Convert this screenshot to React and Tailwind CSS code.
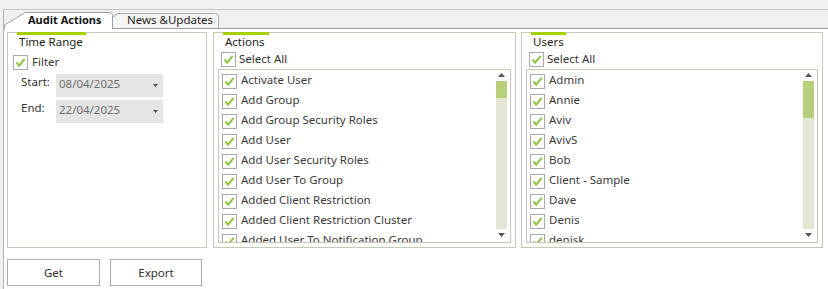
import React from "react";

const actions = [
  "Activate User",
  "Add Group",
  "Add Group Security Roles",
  "Add User",
  "Add User Security Roles",
  "Add User To Group",
  "Added Client Restriction",
  "Added Client Restriction Cluster",
  "Added User To Notification Group",
];

const users = ["Admin", "Annie", "Aviv", "AvivS", "Bob", "Client - Sample", "Dave", "Denis", "denisk"];

const Check = () => (
  <span className="w-[15px] h-[15px] shrink-0 border border-[#a9a9a9] bg-white flex items-center justify-center">
    <svg width="11" height="11" viewBox="0 0 11 11">
      <polyline points="1.5,5.5 4.2,8.6 9.6,1.8" fill="none" stroke="#8cc63f" strokeWidth="2" />
    </svg>
  </span>
);

const Arrow = ({ up }) => (
  <svg width="7" height="4" viewBox="0 0 7 4">
    <polygon points={up ? "0,4 7,4 3.5,0" : "0,0 7,0 3.5,4"} fill="#555" />
  </svg>
);

const GroupBox = ({ title, barWidth, className, children }) => (
  <div className={`relative border border-[#c6c7b7] flex flex-col ${className}`}>
    <div className={`absolute -top-px left-[9px] h-[3px] bg-[#a6d000] ${barWidth}`} />
    <div className="pl-[11px] pt-px h-[17px] leading-4 text-[#1e1e1e]">{title}</div>
    {children}
  </div>
);

const ListBox = ({ items, thumb }) => (
  <div className="mx-[4px] mt-[2px] h-[174px] border border-[#c6c7b7] flex overflow-hidden">
    <div className="flex-1 pt-px pl-[3px] overflow-hidden">
      {items.map((it) => (
        <div key={it} className="h-[20px] flex items-center gap-[4px] shrink-0">
          <Check />
          <span className="leading-4 -mt-[2px] text-[#3a3a3a] whitespace-nowrap">{it}</span>
        </div>
      ))}
    </div>
    <div className="w-[11px] mr-[3px] pt-[3px] flex flex-col">
      <div className="h-[4px] flex justify-center">
        <Arrow up />
      </div>
      <div className="mt-[4px] h-[148px] bg-[#e3e6d5]">
        <div className={`bg-[#b7cf7b] ${thumb}`} />
      </div>
      <div className="flex-1 flex items-center justify-center pb-[1px]">
        <Arrow />
      </div>
    </div>
  </div>
);

const Combo = ({ value }) => (
  <div className="w-[107px] h-[23px] bg-[#e5e5e5] flex items-start justify-between pl-[3px] pr-[5px] pt-[2px]">
    <span className="leading-4 text-[#6e6e6e]">{value}</span>
    <svg width="5" height="3" viewBox="0 0 5 3" className="mt-[8px]">
      <polygon points="0,0 5,0 2.5,3" fill="#505050" />
    </svg>
  </div>
);

export default function App() {
  return (
    <div
      className="w-[828px] h-[289px] bg-[#f0f0f0] pt-[9px] pl-[3px] overflow-hidden text-[11.5px]"
      style={{ fontFamily: '"Noto Sans", "Open Sans", sans-serif' }}
    >
      <div className="h-full border-l border-t border-l-[#b4b4b4] border-t-[#c6c6c6] flex flex-col">
        <div className="h-[19px] border-b border-[#a0a0a0] flex items-end">
          <div className="relative z-10 w-[109px] h-[17px] -mb-px pl-[24px] font-bold text-[#111] leading-4 text-[11px]">
            <svg className="absolute inset-0" width="109" height="17" viewBox="0 0 109 17">
              <path d="M0.5 17 V13 L21 0.5 H105.5 Q108.5 0.5 108.5 3.5 V17" fill="#fff" stroke="#a0a0a0" />
            </svg>
            <span className="relative">Audit Actions</span>
          </div>
          <div className="relative -ml-[18px] w-[124px] h-[15px] pl-[32px] text-[#1e1e1e] leading-[14px]">
            <svg className="absolute inset-0" width="124" height="15" viewBox="0 0 124 15">
              <path d="M0.5 15 L23 0.5 H120.5 Q123.5 0.5 123.5 3.5 V15" fill="#f4f4f4" stroke="#a8a8a8" />
            </svg>
            <span className="relative">News &amp;Updates</span>
          </div>
        </div>

        <div className="flex-1 bg-white pl-[3px] pt-[3px]">
          <div className="flex h-[216px]">
            <GroupBox title="Time Range" barWidth="w-[69px]" className="w-[200px]">
              <div className="flex items-center gap-[4px] pl-[5px] mt-[5px]">
                <Check />
                <span className="leading-4 -mt-[2px] text-[#333]">Filter</span>
              </div>
              <div className="flex items-start pl-[13px] mt-[4px]">
                <span className="w-[35px] leading-4 text-[#333]">Start:</span>
                <Combo value="08/04/2025" />
              </div>
              <div className="flex items-start pl-[13px] mt-[3px]">
                <span className="w-[35px] leading-4 text-[#333]">End:</span>
                <Combo value="22/04/2025" />
              </div>
            </GroupBox>

            <GroupBox title="Actions" barWidth="w-[46px]" className="w-[303px] ml-[6px]">
              <div className="flex items-center gap-[3px] pl-[7px] mt-[2px] h-[15px]">
                <Check />
                <span className="leading-4 -mt-[2px] text-[#333]">Select All</span>
              </div>
              <ListBox items={actions} thumb="h-[17px]" />
            </GroupBox>

            <GroupBox title="Users" barWidth="w-[35px]" className="w-[302px] ml-[5px]">
              <div className="flex items-center gap-[3px] pl-[7px] mt-[2px] h-[15px]">
                <Check />
                <span className="leading-4 -mt-[2px] text-[#333]">Select All</span>
              </div>
              <ListBox items={users} thumb="h-[37px]" />
            </GroupBox>
          </div>

          <div className="flex gap-[10px] mt-[11px]">
            <button className="w-[93px] h-[27px] border border-[#adadad] bg-white text-[#333] leading-4">Get</button>
            <button className="w-[92px] h-[27px] border border-[#adadad] bg-white text-[#333] leading-4">Export</button>
          </div>
        </div>
      </div>
    </div>
  );
}
